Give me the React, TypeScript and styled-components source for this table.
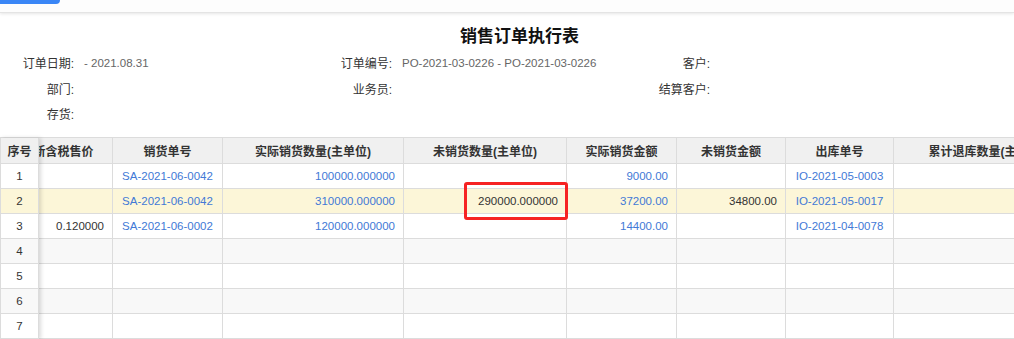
import React from 'react'
import styled, { createGlobalStyle } from 'styled-components'

interface OrderRow {
  price: string
  saleNo: string
  qty: string
  unsoldQty: string
  amount: string
  unsoldAmount: string
  outNo: string
  returned: string
}

type Align = 'left' | 'center' | 'right'

interface Column {
  key: keyof OrderRow
  title: string
  width: number
  align: Align
  link?: boolean
}

const columns: Column[] = [
  { key: 'price', title: '最新含税售价', width: 110, align: 'right' },
  { key: 'saleNo', title: '销货单号', width: 110, align: 'center', link: true },
  { key: 'qty', title: '实际销货数量(主单位)', width: 181, align: 'right', link: true },
  { key: 'unsoldQty', title: '未销货数量(主单位)', width: 163, align: 'right' },
  { key: 'amount', title: '实际销货金额', width: 110, align: 'right', link: true },
  { key: 'unsoldAmount', title: '未销货金额', width: 109, align: 'right' },
  { key: 'outNo', title: '出库单号', width: 108, align: 'center', link: true },
  { key: 'returned', title: '累计退库数量(主单位)', width: 186, align: 'right' }
]

const emptyRow: OrderRow = {
  price: '',
  saleNo: '',
  qty: '',
  unsoldQty: '',
  amount: '',
  unsoldAmount: '',
  outNo: '',
  returned: ''
}

const rows: OrderRow[] = [
  {
    ...emptyRow,
    saleNo: 'SA-2021-06-0042',
    qty: '100000.000000',
    amount: '9000.00',
    outNo: 'IO-2021-05-0003'
  },
  {
    ...emptyRow,
    saleNo: 'SA-2021-06-0042',
    qty: '310000.000000',
    unsoldQty: '290000.000000',
    amount: '37200.00',
    unsoldAmount: '34800.00',
    outNo: 'IO-2021-05-0017'
  },
  {
    ...emptyRow,
    price: '0.120000',
    saleNo: 'SA-2021-06-0002',
    qty: '120000.000000',
    amount: '14400.00',
    outNo: 'IO-2021-04-0078'
  },
  emptyRow,
  emptyRow,
  emptyRow,
  emptyRow
]

const filters: [string, string][] = [
  ['订单日期:', '- 2021.08.31'],
  ['订单编号:', 'PO-2021-03-0226 - PO-2021-03-0226'],
  ['客户:', ''],
  ['部门:', ''],
  ['业务员:', ''],
  ['结算客户:', ''],
  ['存货:', '']
]

const ACTIVE_ROW = 1

const App = () => {
  return (
    <>
      <GlobalStyle />
      <Page>
        <TopBar>
          <PrimaryButton />
        </TopBar>
        <Title>销售订单执行表</Title>
        <FilterGrid>
          {filters.map(([label, value]) => (
            <FilterItem key={label}>
              <FilterLabel>{label}</FilterLabel>
              <FilterValue>{value}</FilterValue>
            </FilterItem>
          ))}
        </FilterGrid>
        <TableArea>
          <FixedSide>
            <GridTable>
              <thead>
                <tr>
                  <HeadCell align="center">序号</HeadCell>
                </tr>
              </thead>
              <tbody>
                {rows.map((_, index) => (
                  <BodyRow key={index} index={index} active={index === ACTIVE_ROW}>
                    <Cell align="center">{index + 1}</Cell>
                  </BodyRow>
                ))}
              </tbody>
            </GridTable>
          </FixedSide>
          <ScrollSide>
            <ScrolledTable>
              <colgroup>
                {columns.map(col => (
                  <col key={col.key} style={{ width: col.width }} />
                ))}
              </colgroup>
              <thead>
                <tr>
                  {columns.map(col => (
                    <HeadCell key={col.key} align="center">
                      {col.title}
                    </HeadCell>
                  ))}
                </tr>
              </thead>
              <tbody>
                {rows.map((row, index) => (
                  <BodyRow key={index} index={index} active={index === ACTIVE_ROW}>
                    {columns.map(col => (
                      <Cell key={col.key} align={col.align} link={col.link}>
                        {row[col.key]}
                        {index === ACTIVE_ROW && col.key === 'unsoldQty' && (
                          <Highlight />
                        )}
                      </Cell>
                    ))}
                  </BodyRow>
                ))}
              </tbody>
            </ScrolledTable>
          </ScrollSide>
        </TableArea>
      </Page>
    </>
  )
}

const GlobalStyle = createGlobalStyle`
  html, body {
    margin: 0;
    padding: 0;
    background: #fff;
  }

  body {
    font-family: "Liberation Sans", Arial, "Noto Sans CJK SC", sans-serif;
    font-size: 12px;
    color: #333;
    overflow: hidden;
  }
`

const Page = styled.div`
  width: 1014px;
  height: 339px;
  overflow: hidden;
  background: #fff;
`

const TopBar = styled.div`
  height: 12px;
  background: #fdfdfd;
  border-bottom: 1px solid #e4e4e4;
  box-shadow: 0 1px 3px rgba(0, 0, 0, 0.1);
`

const PrimaryButton = styled.div`
  width: 60px;
  height: 4px;
  background: #3a86f6;
  border-radius: 0 0 4px 0;
`

const Title = styled.h1`
  margin: 12px 0 0;
  padding-left: 25px;
  font-size: 17px;
  line-height: 24px;
  font-weight: bold;
  color: #111;
  text-align: center;
`

const FilterGrid = styled.div`
  display: grid;
  grid-template-columns: repeat(3, 318px);
  grid-auto-rows: 25.5px;
  margin-top: 1px;
`

const FilterItem = styled.div`
  display: flex;
  align-items: center;
`

const FilterLabel = styled.span`
  width: 74px;
  text-align: right;
  color: #333;
`

const FilterValue = styled.span`
  margin-left: 10px;
  font-size: 11.5px;
  color: #666;
`

const TableArea = styled.div`
  display: flex;
  margin-top: 10px;
  border-top: 1px solid #dcdcdc;
`

const FixedSide = styled.div`
  position: relative;
  z-index: 2;
  flex: none;
  width: 39px;
  box-shadow: 2px 0 4px rgba(0, 0, 0, 0.14);
`

const ScrollSide = styled.div`
  flex: 1;
  overflow: hidden;
`

const GridTable = styled.table`
  width: 100%;
  border-collapse: collapse;
  table-layout: fixed;
`

const ScrolledTable = styled(GridTable)`
  width: 1077px;
  margin-left: -37px;
`

const HeadCell = styled.th<{ align: Align }>`
  height: 25px;
  padding: 0 6px;
  border: 1px solid #dcdcdc;
  border-top: 0;
  background: #f0f0f0;
  font-weight: bold;
  color: #333;
  text-align: ${({ align }) => align};
  white-space: nowrap;
  overflow: hidden;
`

const BodyRow = styled.tr<{ index: number; active: boolean }>`
  background: ${({ index, active }) =>
    active ? '#fcf6d8' : index % 2 === 1 ? '#f8f8f8' : '#fff'};
`

const Cell = styled.td<{ align: Align; link?: boolean }>`
  position: relative;
  height: 24px;
  padding: 0 8px;
  border: 1px solid #dcdcdc;
  font-size: 11.5px;
  color: ${({ link }) => (link ? '#4279d6' : '#333')};
  text-align: ${({ align }) => align};
  white-space: nowrap;
`

const Highlight = styled.span`
  position: absolute;
  left: 60px;
  right: -2px;
  top: -7px;
  bottom: -7px;
  border: 3px solid #f62323;
  border-radius: 3px;
  pointer-events: none;
`

export default App
